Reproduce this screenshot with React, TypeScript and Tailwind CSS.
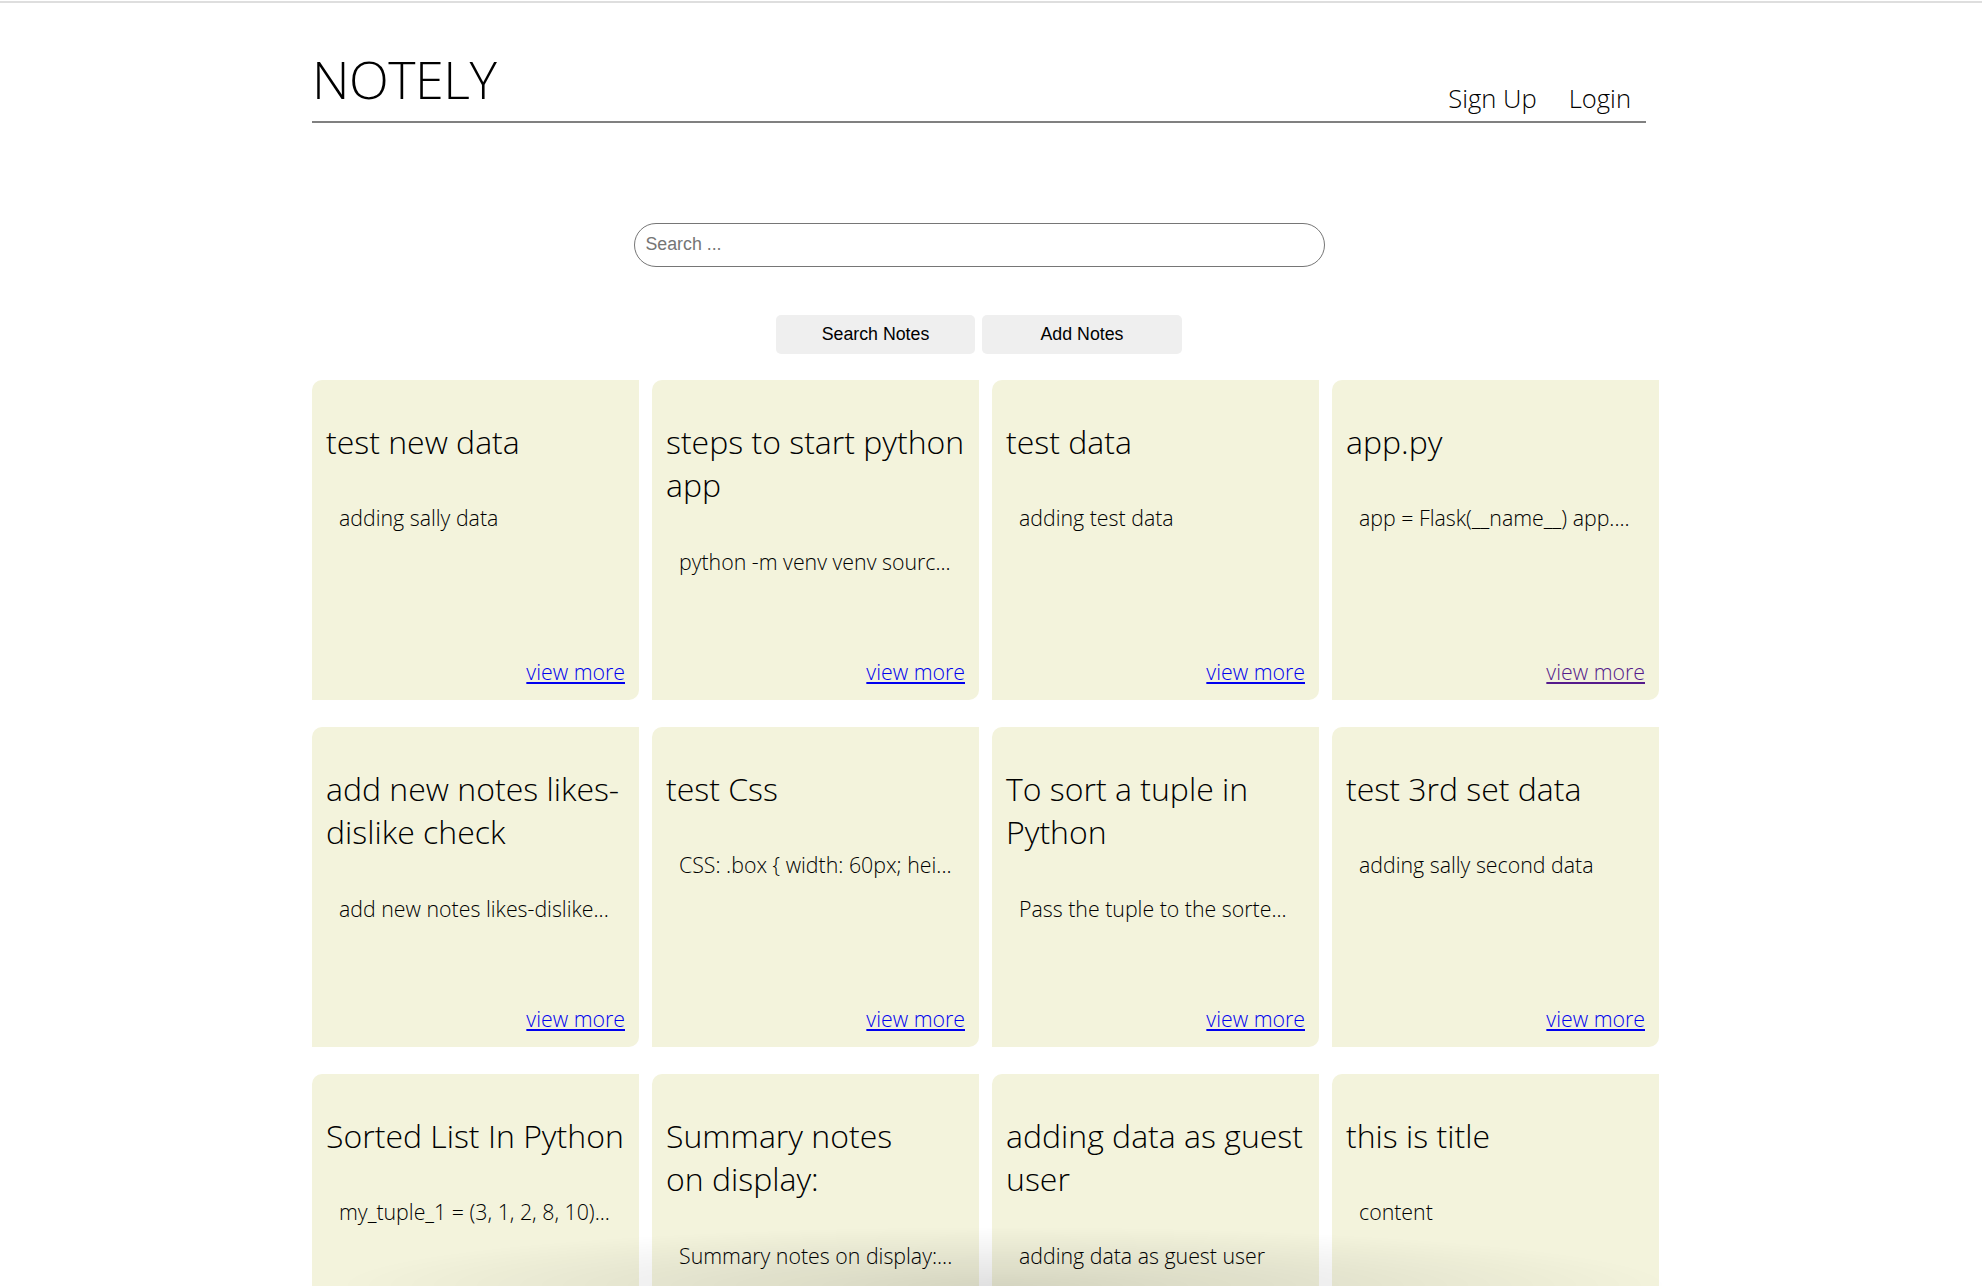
import React from "react";

type Note = { title: React.ReactNode; body: string; visited?: boolean };

const notes: Note[] = [
  { title: "test new data", body: "adding sally data" },
  { title: "steps to start python app", body: "python -m venv venv sourc..." },
  { title: "test data", body: "adding test data" },
  { title: "app.py", body: "app = Flask(__name__) app....", visited: true },
  { title: "add new notes likes-dislike check", body: "add new notes likes-dislike..." },
  { title: "test Css", body: "CSS: .box { width: 60px; hei..." },
  { title: "To sort a tuple in Python", body: "Pass the tuple to the sorte..." },
  { title: "test 3rd set data", body: "adding sally second data" },
  { title: "Sorted List In Python", body: "my_tuple_1 = (3, 1, 2, 8, 10)..." },
  {
    title: (
      <>
        Summary notes
        <br />
        on display:
      </>
    ),
    body: "Summary notes on display:...",
  },
  { title: "adding data as guest user", body: "adding data as guest user" },
  { title: "this is title", body: "content" },
];

function Card({ note }: { note: Note }) {
  return (
    <div className="flex h-[320px] flex-col rounded-tl-[10px] rounded-br-[10px] bg-[#f3f3dc] pt-[40px] pb-[14px]">
      <h2 className="px-[14px] text-[32px] leading-[1.362] font-light text-black">{note.title}</h2>
      <p className="mt-[40px] pl-[27px] pr-[6px] text-[21.33px] leading-[1.362] font-light whitespace-nowrap text-black">
        {note.body}
      </p>
      <div className="mt-auto flex justify-end pr-[14px]">
        <a
          href="#"
          className={
            note.visited
              ? "text-[21.33px] leading-[1.362] font-light text-[#551a8b] underline"
              : "text-[21.33px] leading-[1.362] font-light text-[#0000ee] underline"
          }
        >
          view more
        </a>
      </div>
    </div>
  );
}

export default function App() {
  return (
    <div className="relative min-h-screen bg-white font-['Open_Sans',sans-serif] font-light text-black">
      <div className="mt-[1px] h-[2px] w-full bg-[#dedede]" />
      <div className="ml-[312px] w-[1347px]">
        <header className="flex w-[1334px] items-end justify-between border-b-2 border-[#808080] pt-[41px]">
          <h1 className="mb-[6px] text-[52px] leading-[1.362] font-light tracking-[-0.5px]">NOTELY</h1>
          <nav className="mb-[4px] flex gap-[32px] pr-[15px] text-[25.6px] leading-[1.362] font-light">
            <a href="#">Sign Up</a>
            <a href="#">Login</a>
          </nav>
        </header>

        <div className="w-[1334px] pt-[100px]">
          <input
            type="text"
            placeholder="Search ..."
            className="mx-auto block h-[44px] w-[691px] rounded-full border border-[#767676] bg-white px-[11px] font-['Liberation_Sans',Arial,sans-serif] text-[17.78px] font-normal text-black placeholder:text-[#757575] outline-none"
          />
          <div className="mt-[48px] flex justify-center gap-[7px] font-['Liberation_Sans',Arial,sans-serif] text-[17.78px] font-normal">
            <button className="h-[39px] w-[199px] rounded-[5px] bg-[#efefef] text-black">Search Notes</button>
            <button className="h-[39px] w-[200px] rounded-[5px] bg-[#efefef] text-black">Add Notes</button>
          </div>
        </div>

        <div className="mt-[26px] grid grid-cols-4 gap-x-[13px] gap-y-[27px] pb-[40px]">
          {notes.map((n, i) => (
            <Card key={i} note={n} />
          ))}
        </div>
      </div>
      <div className="pointer-events-none fixed bottom-0 left-[330px] h-[60px] w-[1350px] bg-[radial-gradient(ellipse_at_50%_100%,rgba(0,0,0,0.12),rgba(0,0,0,0)_70%)]" />
    </div>
  );
}
